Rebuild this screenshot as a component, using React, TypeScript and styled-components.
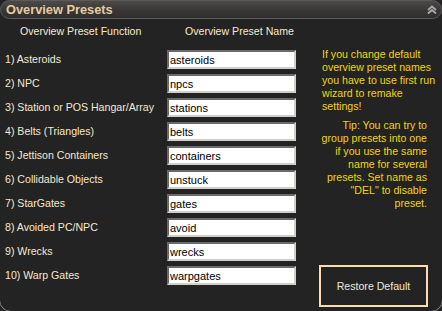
import styled, { createGlobalStyle } from "styled-components";

const presets = [
  ["1) Asteroids", "asteroids"],
  ["2) NPC", "npcs"],
  ["3) Station or POS Hangar/Array", "stations"],
  ["4) Belts (Triangles)", "belts"],
  ["5) Jettison Containers", "containers"],
  ["6) Collidable Objects", "unstuck"],
  ["7) StarGates", "gates"],
  ["8) Avoided PC/NPC", "avoid"],
  ["9) Wrecks", "wrecks"],
  ["10) Warp Gates", "warpgates"],
];

const noteLines = [
  "If you change default",
  "overview preset names",
  "you have to use first run",
  "wizard to remake",
  "settings!",
];

const tipLines = [
  "Tip: You can try to",
  "group presets into one",
  "if you use the same",
  "name for several",
  "presets. Set name as",
  '"DEL" to disable',
  "preset.",
];

const Global = createGlobalStyle`
  html, body {
    margin: 0;
    padding: 0;
    overflow: hidden;
    background: #232323;
  }
  * { box-sizing: border-box; }
`;

export default function App() {
  return (
    <>
      <Global />
      <Window>
        <TitleBar>
          <Title>Overview Presets</Title>
          <Collapse viewBox="0 0 10 10" width="10" height="10">
            <path d="M1 5 L5 1.5 L9 5 M1 8.5 L5 5 L9 8.5" />
          </Collapse>
        </TitleBar>
        <Main>
          <Table>
            <HeaderRow>
              <HeaderCell $pad={15}>Overview Preset Function</HeaderCell>
              <HeaderCell $pad={18}>Overview Preset Name</HeaderCell>
            </HeaderRow>
            <Rows>
              {presets.map(([label, value]) => (
                <Row key={label}>
                  <Label>{label}</Label>
                  <NameInput defaultValue={value} />
                </Row>
              ))}
            </Rows>
          </Table>
          <Side>
            <Note>
              {noteLines.map((l) => (
                <Line key={l}>{l}</Line>
              ))}
            </Note>
            <Tip>
              {tipLines.map((l) => (
                <Line key={l}>{l}</Line>
              ))}
            </Tip>
            <RestoreButton>Restore Default</RestoreButton>
          </Side>
        </Main>
      </Window>
    </>
  );
}

const Window = styled.div`
  position: relative;
  width: 442px;
  height: 311px;
  background: #232323;
  font-family: "Liberation Sans", Arial, sans-serif;
  font-size: 10.6px;
  display: flex;
  flex-direction: column;

  &::after {
    content: "";
    position: absolute;
    inset: -1px;
    border: 1px solid #8c8c8c;
    border-radius: 0 0 12px 12px;
    pointer-events: none;
  }
`;

const TitleBar = styled.div`
  height: 19px;
  display: flex;
  align-items: center;
  justify-content: space-between;
  padding: 0 5px 0 5px;
  border: 1px solid #5c5a5a;
  border-radius: 10px;
  background: linear-gradient(#4d4a4a, #393636 55%, #302e2e);
`;

const Title = styled.div`
  color: #e6cc9e;
  font-weight: bold;
  font-size: 12.8px;
  line-height: 17px;
`;

const Collapse = styled.svg`
  fill: none;
  stroke: #a9a9a9;
  stroke-width: 1.8;
  margin-right: -1px;
`;

const Main = styled.div`
  flex: 1;
  display: flex;
`;

const Table = styled.div`
  width: 300px;
  padding-left: 5px;
`;

const HeaderRow = styled.div`
  display: grid;
  grid-template-columns: 162px 129px;
  margin-top: 6px;
  height: 13px;
`;

const HeaderCell = styled.div<{ $pad: number }>`
  color: #f6e8cf;
  line-height: 13px;
  padding-left: ${({ $pad }) => $pad}px;
  white-space: nowrap;
`;

const Rows = styled.div`
  display: flex;
  flex-direction: column;
  gap: 5px;
  margin-top: 12px;
`;

const Row = styled.div`
  display: grid;
  grid-template-columns: 162px 129px;
  align-items: center;
  height: 19px;
`;

const Label = styled.div`
  color: #f6e8cf;
  white-space: nowrap;
  line-height: 13px;
`;

const NameInput = styled.input`
  width: 129px;
  height: 19px;
  margin: 0;
  padding: 0 0 0 1px;
  border: 2px solid;
  border-color: #6a6a6a #d4d0c8 #d4d0c8 #6a6a6a;
  background: #ffffff;
  color: #000000;
  font-family: "Liberation Sans", Arial, sans-serif;
  font-size: 11px;
  outline: none;
`;

const Side = styled.div`
  flex: 1;
  display: flex;
  flex-direction: column;
  padding: 0 0 4px 19px;
`;

const Note = styled.div`
  color: #f2d600;
  line-height: 13px;
  margin-top: 29px;
  padding-left: 3px;
`;

const Tip = styled.div`
  color: #f2d600;
  line-height: 13px;
  width: 108px;
  margin-top: 6px;
  text-align: right;
`;

const Line = styled.div`
  white-space: nowrap;
`;

const RestoreButton = styled.button`
  margin-top: auto;
  width: 109px;
  height: 42px;
  background: transparent;
  border: 2px solid #ffdcaa;
  color: #f1e7d6;
  font-family: "Liberation Sans", Arial, sans-serif;
  font-size: 10.6px;
  padding: 0;
`;
